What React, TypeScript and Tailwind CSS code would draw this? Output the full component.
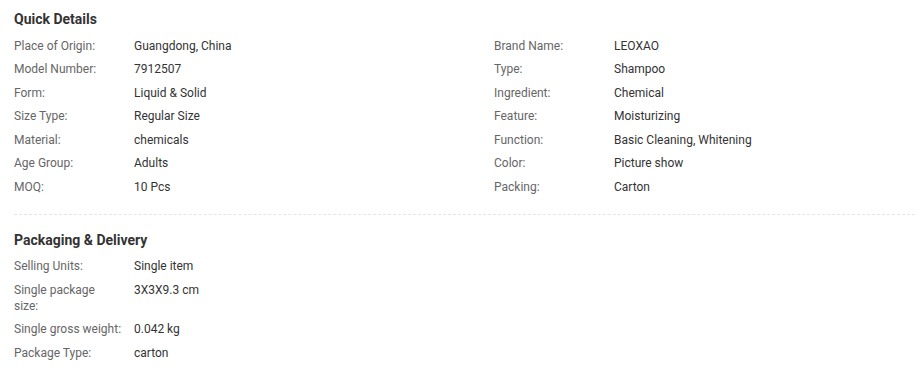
const quick: [string, string][] = [
  ["Place of Origin:", "Guangdong, China"],
  ["Brand Name:", "LEOXAO"],
  ["Model Number:", "7912507"],
  ["Type:", "Shampoo"],
  ["Form:", "Liquid & Solid"],
  ["Ingredient:", "Chemical"],
  ["Size Type:", "Regular Size"],
  ["Feature:", "Moisturizing"],
  ["Material:", "chemicals"],
  ["Function:", "Basic Cleaning, Whitening"],
  ["Age Group:", "Adults"],
  ["Color:", "Picture show"],
  ["MOQ:", "10 Pcs"],
  ["Packing:", "Carton"],
]

const packaging: [string, string][] = [
  ["Selling Units:", "Single item"],
  ["Single package size:", "3X3X9.3 cm"],
  ["Single gross weight:", "0.042 kg"],
  ["Package Type:", "carton"],
]

function Row({ label, value }: { label: string; value: string }) {
  return (
    <div className="flex py-[3.75px] text-[12px] leading-[16px]">
      <div className="w-[120px] shrink-0 text-[#666]">
        <div className="w-[108px]">{label}</div>
      </div>
      <div className="text-[#333]">{value}</div>
    </div>
  )
}

export default function App() {
  return (
    <div className="w-[916px] h-[367px] overflow-hidden bg-white pl-[14px] pr-[1px] pt-[8px] font-['Roboto',sans-serif]">
      <h2 className="text-[14px] leading-[22px] font-bold text-[#333]">Quick Details</h2>
      <div className="mt-[4px] grid grid-cols-[480px_1fr]">
        {quick.map(([l, v]) => (
          <Row key={l} label={l} value={v} />
        ))}
      </div>
      <div className="mt-[15px] border-t border-dashed border-[#e5e5e5]" />
      <h2 className="mt-[14px] text-[14px] leading-[22px] font-bold text-[#333]">Packaging &amp; Delivery</h2>
      <div className="mt-[4px] flex flex-col">
        {packaging.map(([l, v]) => (
          <Row key={l} label={l} value={v} />
        ))}
      </div>
    </div>
  )
}
